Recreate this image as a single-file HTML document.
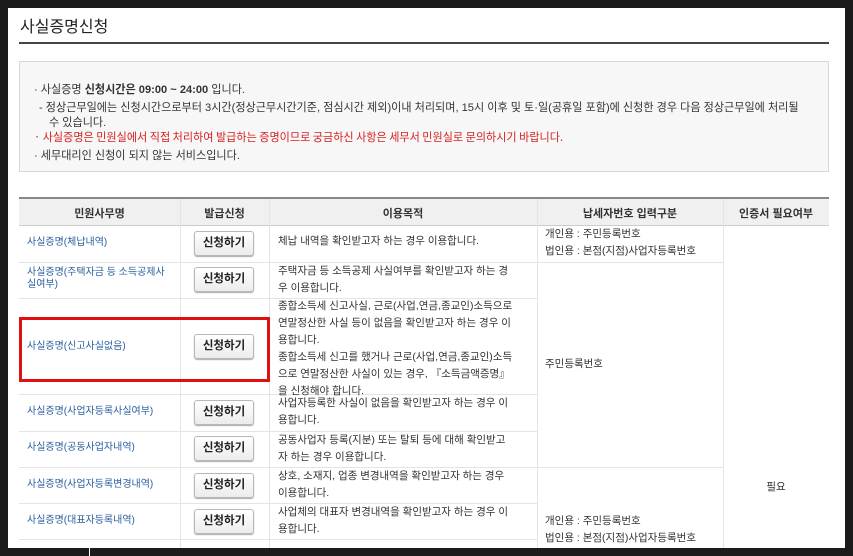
<!DOCTYPE html>
<html><head><meta charset="utf-8"><style>
*{margin:0;padding:0;box-sizing:border-box}
body{width:853px;height:556px;background:#1b1b1b;position:relative;overflow:hidden;font-family:"Liberation Sans","Noto Sans CJK KR","NanumGothic",sans-serif;font-size:11px;color:#333}
.p{position:absolute;left:8px;top:8px;width:837px;height:540px;background:#fff;overflow:hidden}
.a{position:absolute}
.t{font-size:16px;color:#222;left:12px;top:5px}
.rule{left:11px;top:34px;width:810px;height:2px;background:#444}
.info{left:11px;top:53px;width:810px;height:111px;background:#f7f7f7;border:1px solid #d8d8d8}
.info div{position:absolute;white-space:nowrap;font-size:11.1px;color:#333}
.info .red{color:#d62020;font-family:"Noto Sans CJK KR",sans-serif}
.tb{left:11px;top:189px;width:810px;height:2px;background:#888}
.hd{left:11px;top:191px;width:810px;height:27px;background:#f0f0f0;border-bottom:1px solid #ccc}
.h{position:absolute;top:197px;font-weight:bold;font-size:11px;color:#333;text-align:center}
.vl{position:absolute;width:1px;background:#e4e4e4;top:191px;height:360px}
.hl{position:absolute;height:1px;background:#e4e4e4}
.lk{position:absolute;left:19px;color:#2a5f9e;font-size:10px;line-height:12px}
.btn{position:absolute;left:186px;width:60px;height:25px;border:1px solid #b8b8b8;border-radius:3px;background:linear-gradient(#fff,#ececec);box-shadow:0 1px 1px #aaa;font-weight:bold;font-size:11.5px;text-align:center;line-height:23px;color:#222}
.ds{position:absolute;left:270px;width:262px;font-size:10.5px;line-height:17px;color:#333}
.c4{position:absolute;left:537px;font-size:10.5px;line-height:17px;color:#333}
</style></head><body>
<div class="p">
<div class="a t">사실증명신청</div>
<div class="a rule"></div>
<div class="a info">
<div style="left:14px;top:19px">· 사실증명 <b>신청시간은 09:00 ~ 24:00</b> 입니다.</div>
<div style="left:19px;top:37px">- 정상근무일에는 신청시간으로부터 3시간(정상근무시간기준, 점심시간 제외)이내 처리되며, 15시 이후 및 토·일(공휴일 포함)에 신청한 경우 다음 정상근무일에 처리될</div>
<div style="left:29px;top:52px">수 있습니다.</div>
<div class="red" style="left:14px;top:67px">· 사실증명은 민원실에서 직접 처리하여 발급하는 증명이므로 궁금하신 사항은 세무서 민원실로 문의하시기 바랍니다.</div>
<div style="left:14px;top:85px">· 세무대리인 신청이 되지 않는 서비스입니다.</div>
</div>
<div class="a tb"></div>
<div class="a hd"></div>
<div class="h" style="left:11px;width:161px">민원사무명</div>
<div class="h" style="left:172px;width:89px">발급신청</div>
<div class="h" style="left:261px;width:268px">이용목적</div>
<div class="h" style="left:529px;width:186px">납세자번호 입력구분</div>
<div class="h" style="left:715px;width:106px">인증서 필요여부</div>
<div class="vl" style="left:172px"></div><div class="vl" style="left:261px"></div><div class="vl" style="left:529px"></div><div class="vl" style="left:715px"></div>
<div class="hl" style="left:11px;width:704px;top:254px"></div>
<div class="hl" style="left:11px;width:518px;top:290px"></div>
<div class="hl" style="left:11px;width:518px;top:386px"></div>
<div class="hl" style="left:11px;width:518px;top:423px"></div>
<div class="hl" style="left:11px;width:704px;top:459px"></div>
<div class="hl" style="left:11px;width:518px;top:495px"></div>
<div class="hl" style="left:11px;width:518px;top:531px"></div>

<div class="lk" style="top:229px">사실증명(체납내역)</div>
<div class="lk" style="top:259px">사실증명(주택자금 등 소득공제사<br>실여부)</div>
<div class="lk" style="top:333px">사실증명(신고사실없음)</div>
<div class="lk" style="top:398px">사실증명(사업자등록사실여부)</div>
<div class="lk" style="top:434px">사실증명(공동사업자내역)</div>
<div class="lk" style="top:471px">사실증명(사업자등록변경내역)</div>
<div class="lk" style="top:507px">사실증명(대표자등록내역)</div>

<div class="btn" style="top:223px">신청하기</div>
<div class="btn" style="top:259px">신청하기</div>
<div class="btn" style="top:326px">신청하기</div>
<div class="btn" style="top:392px">신청하기</div>
<div class="btn" style="top:428px">신청하기</div>
<div class="btn" style="top:465px">신청하기</div>
<div class="btn" style="top:501px">신청하기</div>

<div class="ds" style="top:225px">체납 내역을 확인받고자 하는 경우 이용합니다.</div>
<div class="ds" style="top:255px">주택자금 등 소득공제 사실여부를 확인받고자 하는 경<br>우 이용합니다.</div>
<div class="ds" style="top:290px">종합소득세 신고사실, 근로(사업,연금,종교인)소득으로<br>연말정산한 사실 등이 없음을 확인받고자 하는 경우 이<br>용합니다.<br>종합소득세 신고를 했거나 근로(사업,연금,종교인)소득<br>으로 연말정산한 사실이 있는 경우, 『소득금액증명』<br>을 신청해야 합니다.</div>
<div class="ds" style="top:387px">사업자등록한 사실이 없음을 확인받고자 하는 경우 이<br>용합니다.</div>
<div class="ds" style="top:424px">공동사업자 등록(지분) 또는 탈퇴 등에 대해 확인받고<br>자 하는 경우 이용합니다.</div>
<div class="ds" style="top:460px">상호, 소재지, 업종 변경내역을 확인받고자 하는 경우<br>이용합니다.</div>
<div class="ds" style="top:496px">사업체의 대표자 변경내역을 확인받고자 하는 경우 이<br>용합니다.</div>

<div class="c4" style="top:218px">개인용 : 주민등록번호<br>법인용 : 본점(지점)사업자등록번호</div>
<div class="c4" style="top:348px">주민등록번호</div>
<div class="c4" style="top:505px">개인용 : 주민등록번호<br>법인용 : 본점(지점)사업자등록번호</div>
<div class="a" style="left:715px;width:106px;text-align:center;top:471px;font-size:10.5px">필요</div>

<div class="a" style="left:11px;top:309px;width:251px;height:65px;border:3px solid #e01010"></div>
</div>
<div class="a" style="left:89px;top:545px;width:1px;height:11px;background:#fff"></div>
</body></html>
